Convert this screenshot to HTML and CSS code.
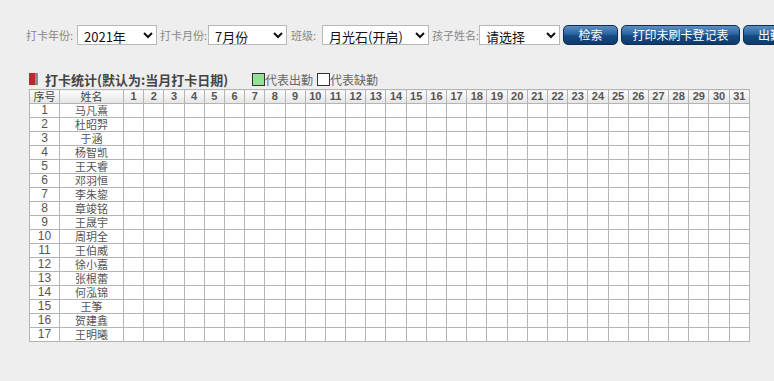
FILE: index.html
```html
<!DOCTYPE html>
<html lang="zh-CN">
<head>
    <meta charset="UTF-8">
    <title>打卡统计</title>
    <link rel="stylesheet" href="styles.css">
</head>
<body>
    <div class="toolbar">
        <label class="lbl lbl-year">打卡年份:</label>
        <select class="sel sel-year"><option>2021年</option></select>
        <label class="lbl lbl-month">打卡月份:</label>
        <select class="sel sel-month"><option>7月份</option></select>
        <label class="lbl lbl-class">班级:</label>
        <select class="sel sel-class"><option>月光石(开启)</option></select>
        <label class="lbl lbl-child">孩子姓名:</label>
        <select class="sel sel-child"><option>请选择</option></select>
        <button class="btn btn-search">检索</button>
        <button class="btn btn-print">打印未刷卡登记表</button>
        <button class="btn btn-export">出勤统计表</button>
    </div>

    <div class="title-row">
        <span class="title-icon"></span>
        <span class="title">打卡统计(默认为:当月打卡日期)</span>
        <span class="legend"><i class="box box-on"></i>代表出勤</span>
        <span class="legend"><i class="box box-off"></i>代表缺勤</span>
    </div>

    <table class="grid" id="grid">
        <colgroup>
            <col class="c-no">
            <col class="c-name">
        </colgroup>
        <thead>
            <tr id="head-row">
                <th>序号</th>
                <th>姓名</th>
            </tr>
        </thead>
        <tbody id="grid-body"></tbody>
    </table>

    <script>
        var names = ['马凡熹', '杜昭羿', '于涵', '杨智凯', '王天睿', '邓羽恒', '李朱鋆', '章竣铭', '王晟宇',
            '周玥全', '王伯威', '徐小嘉', '张根蕾', '何泓锦', '王筝', '贺建鑫', '王明曦'];
        var days = 31;

        var head = document.getElementById('head-row');
        for (var d = 1; d <= days; d++) {
            var th = document.createElement('th');
            th.className = 'day';
            th.innerText = d;
            head.appendChild(th);
        }

        var body = document.getElementById('grid-body');
        for (var i = 0; i < names.length; i++) {
            var tr = document.createElement('tr');
            var html = '<td class="no">' + (i + 1) + '</td><td class="name">' + names[i] + '</td>';
            for (var j = 0; j < days; j++) {
                html += '<td></td>';
            }
            tr.innerHTML = html;
            body.appendChild(tr);
        }
    </script>
</body>
</html>
```

FILE: styles.css
```css
body {
    margin: 0;
    background-color: #eeeeee;
    font-family: "Noto Sans CJK SC", "Liberation Sans", sans-serif;
    font-size: 12px;
    color: #555;
    overflow: hidden;
}

/* 查询条件 */
.toolbar {
    display: flex;
    align-items: center;
    flex-wrap: nowrap;
    padding: 24px 0 0 26px;
    height: 21px;
    white-space: nowrap;
}

.lbl {
    font-size: 11px;
    color: #888;
    flex: none;
}

.lbl-year { width: 51px; }
.lbl-month { width: 48px; margin-left: 3px; }
.lbl-class { width: 31px; margin-left: 4px; }
.lbl-child { width: 47px; margin-left: 3px; }

.sel {
    flex: none;
    height: 20px;
    padding: 0 2px;
    border: 1px solid #b8b8b8;
    border-radius: 0;
    background-color: #fff;
    font-family: "Noto Sans CJK SC", sans-serif;
    font-size: 13px;
    color: #111;
    box-sizing: border-box;
}

.sel-year { width: 80px; }
.sel-month { width: 79px; }
.sel-class { width: 107px; }
.sel-child { width: 81px; }

.btn {
    flex: none;
    height: 20px;
    margin-left: 3px;
    padding: 0;
    border: 1px solid #0f2f52;
    border-radius: 5px;
    background: linear-gradient(#5b8fc4, #2c64a0 45%, #154a82 55%, #0f3a6a);
    color: #fff;
    font-family: "Noto Sans CJK SC", sans-serif;
    font-size: 12px;
    box-sizing: border-box;
}

.btn-search { width: 55px; }
.btn-print { width: 119px; }
.btn-export { width: 90px; }

/* 标题 */
.title-row {
    display: flex;
    align-items: center;
    height: 20px;
    margin-top: 24px;
    padding-left: 29px;
    white-space: nowrap;
}

.title-icon {
    width: 6px;
    height: 12px;
    background-color: #c0272d;
    border-right: 3px solid #8a8a8a;
    margin-right: 7px;
}

.title {
    font-size: 13px;
    font-weight: bold;
    color: #444;
    width: 207px;
}

.legend {
    display: flex;
    align-items: center;
    font-size: 12px;
    color: #666;
    margin-right: 4px;
}

.box {
    display: inline-block;
    width: 11px;
    height: 11px;
    border: 1px solid #333;
}

.box-on { background-color: #93e293; }
.box-off { background-color: #fff; }

/* 表格 */
.grid {
    margin-left: 29px;
    width: 721px;
    table-layout: fixed;
    border-collapse: collapse;
    background-color: #fff;
}

.grid .c-no { width: 30px; }
.grid .c-name { width: 64px; }

.grid th,
.grid td {
    height: 13px;
    padding: 0;
    border: 1px solid #b4b4b4;
    font-size: 11px;
    line-height: 13px;
    text-align: center;
    overflow: hidden;
    white-space: nowrap;
}

.grid th {
    background: linear-gradient(#fdfdfd, #e4e4e4);
    font-weight: normal;
    color: #444;
}

.grid th.day {
    font-family: "Liberation Sans", sans-serif;
    font-weight: bold;
    color: #555;
}

.grid td {
    color: #555;
}

.grid td.no {
    font-family: "Liberation Sans", sans-serif;
    font-size: 12px;
}
```
